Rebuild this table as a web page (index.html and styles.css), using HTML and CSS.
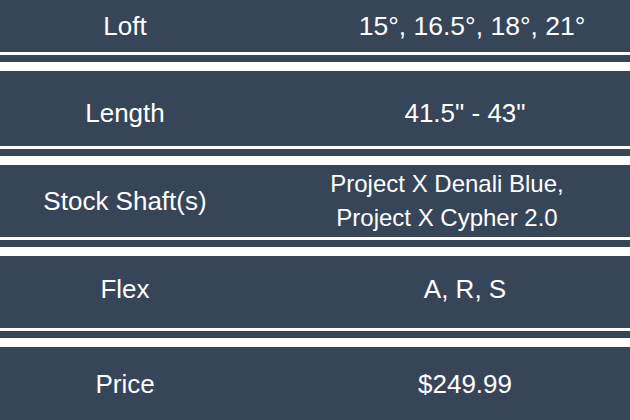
FILE: index.html
```html
<!DOCTYPE html>
<html lang="en">
<head>
<meta charset="utf-8">
<title>Specs</title>
<link rel="stylesheet" href="styles.css">
</head>
<body>
<div class="specs">
  <div class="row row-loft">
    <div class="label">Loft</div>
    <div class="value value-loft">15°, 16.5°, 18°, 21°</div>
  </div>
  <div class="sep"><span class="line-thin"></span><span class="line-gap"></span><span class="line-thick"></span></div>
  <div class="row row-length">
    <div class="label">Length</div>
    <div class="value">41.5" - 43"</div>
  </div>
  <div class="sep"><span class="line-thin"></span><span class="line-gap"></span><span class="line-thick"></span></div>
  <div class="row row-shaft">
    <div class="label">Stock Shaft(s)</div>
    <div class="value value-shaft">Project X Denali Blue,<br>Project X Cypher 2.0</div>
  </div>
  <div class="sep"><span class="line-thin"></span><span class="line-gap"></span><span class="line-thick"></span></div>
  <div class="row row-flex">
    <div class="label">Flex</div>
    <div class="value">A, R, S</div>
  </div>
  <div class="sep"><span class="line-thin"></span><span class="line-gap"></span><span class="line-thick"></span></div>
  <div class="row row-price">
    <div class="label">Price</div>
    <div class="value">$249.99</div>
  </div>
</div>
</body>
</html>
```

FILE: styles.css
```css
html, body {
  margin: 0;
  padding: 0;
  background: #ffffff;
}

.specs {
  width: 630px;
  height: 420px;
  display: flex;
  flex-direction: column;
  font-family: "Liberation Sans", Arial, sans-serif;
  color: #ffffff;
  overflow: hidden;
}

.row {
  display: grid;
  grid-template-columns: 250px 1fr;
  align-items: center;
  background: #374559;
  font-size: 26px;
  line-height: 30px;
  box-sizing: border-box;
}

.row-loft { height: 52px; }
.row-length { height: 75px; padding-top: 8px; }
.row-shaft { height: 72px; }
.row-flex { height: 72px; padding-bottom: 7px; }
.row-price { height: 73px; }

.label {
  text-align: center;
}

.value {
  text-align: center;
  padding-left: 50px;
}

.value-loft {
  padding-left: 64px;
  font-size: 26.5px;
}

.value-shaft {
  padding-left: 14px;
  font-size: 24px;
  line-height: 34px;
}

.sep {
  display: flex;
  flex-direction: column;
}

.line-thin {
  height: 3px;
  background: #ffffff;
}

.line-gap {
  height: 7px;
  background: #374559;
}

.line-thick {
  height: 9px;
  background: #ffffff;
}
```
